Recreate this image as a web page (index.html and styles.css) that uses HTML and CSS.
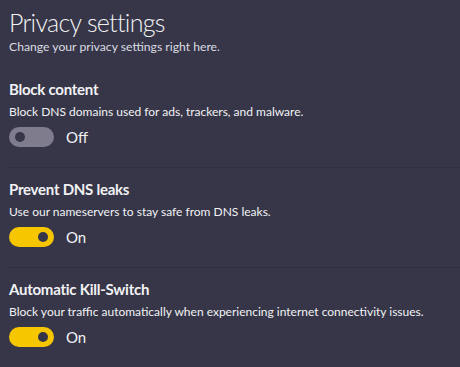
FILE: index.html
```html
<!DOCTYPE html>
<html lang="en">
<head>
    <meta charset="UTF-8">
    <meta name="viewport" content="width=device-width, initial-scale=1.0">
    <title>Privacy settings</title>
    <link rel="stylesheet" href="styles.css">
</head>
<body>
    <header class="page-head">
        <h1>Privacy settings</h1>
        <p>Change your privacy settings right here.</p>
    </header>

    <section class="setting">
        <h2>Block content</h2>
        <p>Block DNS domains used for ads, trackers, and malware.</p>
        <div class="toggle-row">
            <span class="toggle"></span>
            <span class="state">Off</span>
        </div>
    </section>

    <section class="setting">
        <h2>Prevent DNS leaks</h2>
        <p>Use our nameservers to stay safe from DNS leaks.</p>
        <div class="toggle-row">
            <span class="toggle on"></span>
            <span class="state">On</span>
        </div>
    </section>

    <section class="setting">
        <h2>Automatic Kill-Switch</h2>
        <p>Block your traffic automatically when experiencing internet connectivity issues.</p>
        <div class="toggle-row">
            <span class="toggle on"></span>
            <span class="state">On</span>
        </div>
    </section>
</body>
</html>
```

FILE: styles.css
```css
body {
    margin: 0;
    padding: 0 0 0 9px;
    background-color: #363648;
    color: #f2f2f4;
    font-family: Lato, "Noto Sans", sans-serif;
}

.page-head {
    padding-top: 6px;
}

.page-head h1 {
    margin: 0;
    font-size: 25px;
    font-weight: 300;
    letter-spacing: -0.7px;
    line-height: 33px;
}

.page-head p {
    margin: 0;
    font-size: 12.2px;
    line-height: 16px;
    color: #dcdce2;
}

.setting {
    padding: 11px 0 20px;
    border-bottom: 1px solid #2f2f40;
}

.setting:first-of-type {
    padding-top: 24px;
}

.setting:last-of-type {
    border-bottom: none;
}

.setting h2 {
    margin: 0;
    font-size: 15px;
    font-weight: 700;
    letter-spacing: -0.25px;
    line-height: 20px;
}

.setting p {
    margin: 5px 0 0;
    font-size: 12px;
    line-height: 16px;
}

.toggle-row {
    display: flex;
    align-items: center;
    gap: 12px;
    margin-top: 7px;
}

.toggle {
    position: relative;
    width: 45px;
    height: 20px;
    border-radius: 10px;
    background: #7e7c8d;
}

.toggle::after {
    content: "";
    position: absolute;
    top: 5px;
    left: 6px;
    width: 10px;
    height: 10px;
    border-radius: 50%;
    background: #363648;
}

.toggle.on {
    background: #f6c600;
}

.toggle.on::after {
    left: auto;
    right: 6px;
}

.state {
    font-size: 15px;
}
```
